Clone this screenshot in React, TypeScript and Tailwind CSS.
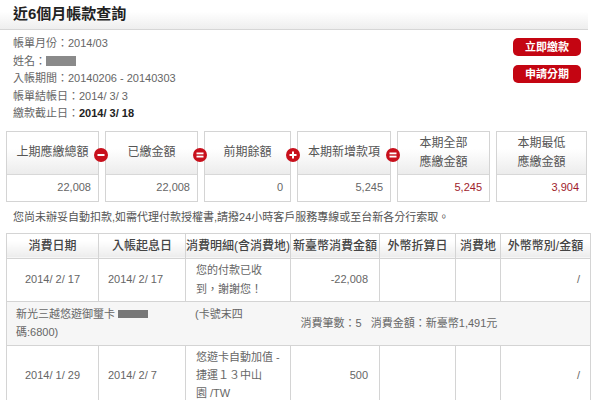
import React from "react";

const font = { fontFamily: '"Liberation Sans", "Noto Sans CJK TC", sans-serif' };

function Op({ kind }: { kind: "minus" | "eq" | "plus" }) {
  return (
    <div className="absolute right-[-10px] top-[16px] z-10 w-[14px] h-[14px] rounded-full bg-[#c8101c] flex items-center justify-center">
      <svg width="14" height="14" viewBox="0 0 14 14">
        {kind === "minus" && <rect x="3.5" y="6" width="7" height="2" fill="#fff" />}
        {kind === "eq" && (
          <>
            <rect x="3.5" y="4.5" width="7" height="1.8" fill="#fff" />
            <rect x="3.5" y="7.7" width="7" height="1.8" fill="#fff" />
          </>
        )}
        {kind === "plus" && (
          <>
            <rect x="3.5" y="6" width="7" height="2" fill="#fff" />
            <rect x="6" y="3.5" width="2" height="7" fill="#fff" />
          </>
        )}
      </svg>
    </div>
  );
}

function Box({
  w,
  title,
  value,
  red,
  op,
}: {
  w: string;
  title: React.ReactNode;
  value: string;
  red?: boolean;
  op?: "minus" | "eq" | "plus";
}) {
  return (
    <div className={`relative ${w} border border-[#d4d4d4] bg-white`}>
      <div className="h-[43px] flex items-center justify-center text-center text-[12px] leading-[19px] text-[#555] bg-gradient-to-b from-white from-40% to-[#ececec] border-b border-[#d8d8d8]">
        {title}
      </div>
      <div className={`h-[26px] flex items-center justify-end pr-[7px] text-[11px] ${red ? "text-[#a01c2c]" : "text-[#666]"}`}>
        {value}
      </div>
      {op && <Op kind={op} />}
    </div>
  );
}

export default function App() {
  const th = "border border-[#d4d4d4] bg-gradient-to-b from-white from-30% to-[#ececec] text-[12px] font-medium text-[#444] text-center h-[25px] p-0 whitespace-nowrap";
  const td = "border border-[#d4d4d4] text-[11px] text-[#666] align-middle";
  return (
    <div className="w-[600px] h-[400px] overflow-hidden bg-white" style={font}>
      <div className="w-[588px] h-[30px] flex items-center pl-[13px] bg-gradient-to-b from-white from-40% to-[#eeeeee] border-b border-[#d6d6d6]">
        <span className="text-[15px] font-bold text-[#222]">近6個月帳款查詢</span>
      </div>

      <div className="flex justify-between pr-[19px]">
        <div className="pl-[13px] pt-[5px] text-[11px] leading-[17.5px] text-[#666]">
          <div>帳單月份：2014/03</div>
          <div className="flex items-center">
            姓名：<span className="inline-block w-[30px] h-[10px] bg-[#8a8a8a] blur-[0.6px]" />
          </div>
          <div>入帳期間：20140206 - 20140303</div>
          <div>帳單結帳日：2014/ 3/ 3</div>
          <div>
            繳款截止日：<span className="font-bold text-[#222]">2014/ 3/ 18</span>
          </div>
        </div>
        <div className="flex flex-col gap-[9px] mt-[8px]">
          <button className="w-[68px] h-[18px] rounded-[5px] bg-[#c40512] text-white text-[11px] font-bold leading-none flex items-center justify-center">
            立即繳款
          </button>
          <button className="w-[68px] h-[18px] rounded-[5px] bg-[#c40512] text-white text-[11px] font-bold leading-none flex items-center justify-center">
            申請分期
          </button>
        </div>
      </div>

      <div className="flex gap-[6px] pl-[6px] mt-[8px]">
        <Box w="w-[93px]" title="上期應繳總額" value="22,008" op="minus" />
        <Box w="w-[93px]" title="已繳金額" value="22,008" op="eq" />
        <Box w="w-[87px]" title="前期餘額" value="0" op="plus" />
        <Box w="w-[94px]" title="本期新增款項" value="5,245" op="eq" />
        <Box w="w-[93px]" title={<span>本期全部<br />應繳金額</span>} value="5,245" red />
        <Box w="w-[91px]" title={<span>本期最低<br />應繳金額</span>} value="3,904" red />
      </div>

      <div className="pl-[13px] mt-[7px] text-[11px] leading-[16px] text-[#555]">
        您尚未辦妥自動扣款,如需代理付款授權書,請撥24小時客戶服務專線或至台新各分行索取。
      </div>

      <table className="ml-[6px] mt-[8px] w-[584px] table-fixed border-collapse">
        <colgroup>
          <col className="w-[92px]" />
          <col className="w-[87px]" />
          <col className="w-[105px]" />
          <col className="w-[89px]" />
          <col className="w-[76px]" />
          <col className="w-[45px]" />
          <col className="w-[90px]" />
        </colgroup>
        <thead>
          <tr>
            <th className={th}>消費日期</th>
            <th className={th}>入帳起息日</th>
            <th className={th}>消費明細(含消費地)</th>
            <th className={th}>新臺幣消費金額</th>
            <th className={th}>外幣折算日</th>
            <th className={th}>消費地</th>
            <th className={th}>外幣幣別/金額</th>
          </tr>
        </thead>
        <tbody>
          <tr className="h-[43px]">
            <td className={`${td} text-center`}>2014/ 2/ 17</td>
            <td className={`${td} pl-[9px]`}>2014/ 2/ 17</td>
            <td className={`${td} pl-[10px] leading-[19px]`}>
              您的付款已收<br />到，謝謝您！
            </td>
            <td className={`${td} text-right pr-[11px]`}>-22,008</td>
            <td className={td}></td>
            <td className={td}></td>
            <td className={`${td} text-right pr-[10px]`}>/</td>
          </tr>
          <tr className="h-[44px] bg-[#f6f6f6]">
            <td colSpan={3} className="border-y border-l border-[#d4d4d4] text-[11px] text-[#666] leading-[18px] pl-[9px] align-middle">
              <div className="flex items-center">
                <span>新光三越悠遊御璽卡&nbsp;</span>
                <span className="inline-block w-[30px] h-[8px] bg-[#777]" />
                <span className="ml-[47px]">(卡號末四</span>
              </div>
              <div>碼:6800)</div>
            </td>
            <td colSpan={4} className="border-y border-r border-[#d4d4d4] text-[11px] text-[#666] pl-[10px] align-middle">
              消費筆數：5&nbsp;&nbsp;&nbsp;消費金額：新臺幣1,491元
            </td>
          </tr>
          <tr className="h-[60px]">
            <td className={`${td} text-center`}>2014/ 1/ 29</td>
            <td className={`${td} pl-[9px]`}>2014/ 2/ 7</td>
            <td className={`${td} pl-[10px] leading-[18px]`}>
              悠遊卡自動加值 -<br />捷運１３中山<br />園 /TW
            </td>
            <td className={`${td} text-right pr-[11px]`}>500</td>
            <td className={td}></td>
            <td className={td}></td>
            <td className={`${td} text-right pr-[10px]`}>/</td>
          </tr>
        </tbody>
      </table>
    </div>
  );
}
